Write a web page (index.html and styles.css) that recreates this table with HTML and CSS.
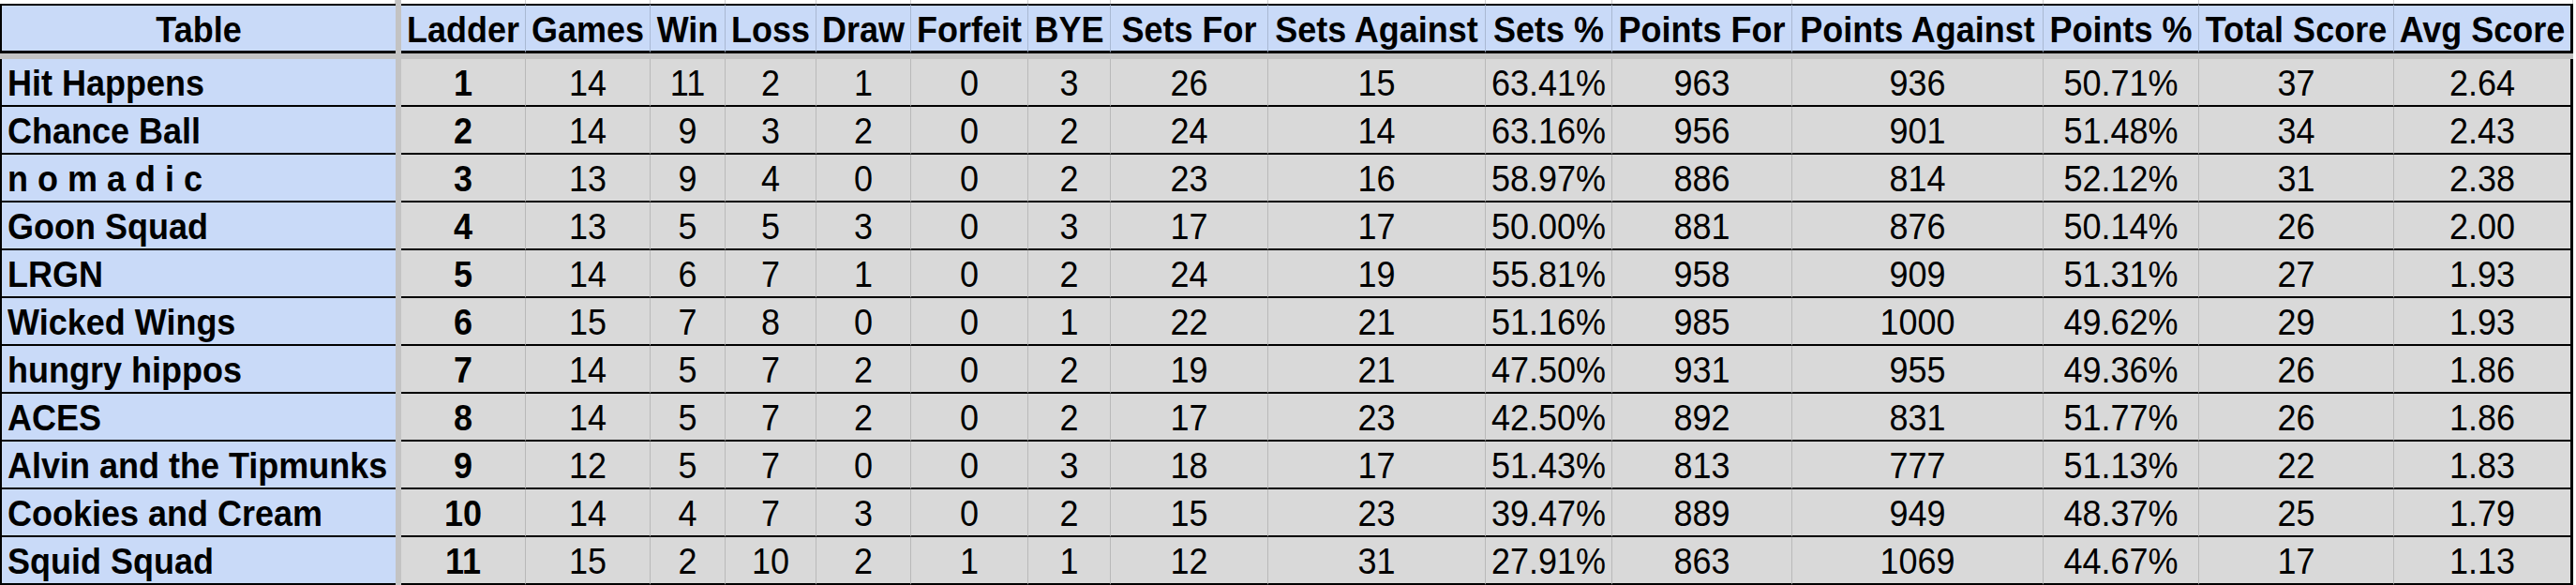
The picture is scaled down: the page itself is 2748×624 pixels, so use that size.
FILE: index.html
```html
<!DOCTYPE html>
<html lang="en">
<head>
<meta charset="utf-8">
<title>Table</title>
<link rel="stylesheet" href="styles.css">
</head>
<body>
<div class="sheet" role="table">
  <div class="freeze-col"></div>
  <div class="freeze-row"></div>

  <div class="strip"></div><div class="strip"></div><div class="strip"></div><div class="strip"></div><div class="strip"></div><div class="strip"></div><div class="strip"></div><div class="strip"></div><div class="strip"></div><div class="strip"></div><div class="strip"></div><div class="strip"></div><div class="strip"></div><div class="strip"></div><div class="strip"></div><div class="strip"></div>

  <div class="cell h name-h"><span>Table</span></div>
  <div class="cell h"><span>Ladder</span></div>
  <div class="cell h"><span>Games</span></div>
  <div class="cell h"><span>Win</span></div>
  <div class="cell h"><span>Loss</span></div>
  <div class="cell h"><span>Draw</span></div>
  <div class="cell h"><span>Forfeit</span></div>
  <div class="cell h"><span>BYE</span></div>
  <div class="cell h"><span>Sets For</span></div>
  <div class="cell h"><span>Sets Against</span></div>
  <div class="cell h"><span>Sets %</span></div>
  <div class="cell h"><span>Points For</span></div>
  <div class="cell h"><span>Points Against</span></div>
  <div class="cell h"><span>Points %</span></div>
  <div class="cell h"><span>Total Score</span></div>
  <div class="cell h last"><span>Avg Score</span></div>

  <div class="cell n"><span>Hit Happens</span></div><div class="cell d b"><span>1</span></div><div class="cell d"><span>14</span></div><div class="cell d"><span>11</span></div><div class="cell d"><span>2</span></div><div class="cell d"><span>1</span></div><div class="cell d"><span>0</span></div><div class="cell d"><span>3</span></div><div class="cell d"><span>26</span></div><div class="cell d"><span>15</span></div><div class="cell d"><span>63.41%</span></div><div class="cell d"><span>963</span></div><div class="cell d"><span>936</span></div><div class="cell d"><span>50.71%</span></div><div class="cell d"><span>37</span></div><div class="cell d last"><span>2.64</span></div>

  <div class="cell n"><span>Chance Ball</span></div><div class="cell d b"><span>2</span></div><div class="cell d"><span>14</span></div><div class="cell d"><span>9</span></div><div class="cell d"><span>3</span></div><div class="cell d"><span>2</span></div><div class="cell d"><span>0</span></div><div class="cell d"><span>2</span></div><div class="cell d"><span>24</span></div><div class="cell d"><span>14</span></div><div class="cell d"><span>63.16%</span></div><div class="cell d"><span>956</span></div><div class="cell d"><span>901</span></div><div class="cell d"><span>51.48%</span></div><div class="cell d"><span>34</span></div><div class="cell d last"><span>2.43</span></div>

  <div class="cell n"><span>n o m a d i c</span></div><div class="cell d b"><span>3</span></div><div class="cell d"><span>13</span></div><div class="cell d"><span>9</span></div><div class="cell d"><span>4</span></div><div class="cell d"><span>0</span></div><div class="cell d"><span>0</span></div><div class="cell d"><span>2</span></div><div class="cell d"><span>23</span></div><div class="cell d"><span>16</span></div><div class="cell d"><span>58.97%</span></div><div class="cell d"><span>886</span></div><div class="cell d"><span>814</span></div><div class="cell d"><span>52.12%</span></div><div class="cell d"><span>31</span></div><div class="cell d last"><span>2.38</span></div>

  <div class="cell n"><span>Goon Squad</span></div><div class="cell d b"><span>4</span></div><div class="cell d"><span>13</span></div><div class="cell d"><span>5</span></div><div class="cell d"><span>5</span></div><div class="cell d"><span>3</span></div><div class="cell d"><span>0</span></div><div class="cell d"><span>3</span></div><div class="cell d"><span>17</span></div><div class="cell d"><span>17</span></div><div class="cell d"><span>50.00%</span></div><div class="cell d"><span>881</span></div><div class="cell d"><span>876</span></div><div class="cell d"><span>50.14%</span></div><div class="cell d"><span>26</span></div><div class="cell d last"><span>2.00</span></div>

  <div class="cell n"><span>LRGN</span></div><div class="cell d b"><span>5</span></div><div class="cell d"><span>14</span></div><div class="cell d"><span>6</span></div><div class="cell d"><span>7</span></div><div class="cell d"><span>1</span></div><div class="cell d"><span>0</span></div><div class="cell d"><span>2</span></div><div class="cell d"><span>24</span></div><div class="cell d"><span>19</span></div><div class="cell d"><span>55.81%</span></div><div class="cell d"><span>958</span></div><div class="cell d"><span>909</span></div><div class="cell d"><span>51.31%</span></div><div class="cell d"><span>27</span></div><div class="cell d last"><span>1.93</span></div>

  <div class="cell n"><span>Wicked Wings</span></div><div class="cell d b"><span>6</span></div><div class="cell d"><span>15</span></div><div class="cell d"><span>7</span></div><div class="cell d"><span>8</span></div><div class="cell d"><span>0</span></div><div class="cell d"><span>0</span></div><div class="cell d"><span>1</span></div><div class="cell d"><span>22</span></div><div class="cell d"><span>21</span></div><div class="cell d"><span>51.16%</span></div><div class="cell d"><span>985</span></div><div class="cell d"><span>1000</span></div><div class="cell d"><span>49.62%</span></div><div class="cell d"><span>29</span></div><div class="cell d last"><span>1.93</span></div>

  <div class="cell n"><span>hungry hippos</span></div><div class="cell d b"><span>7</span></div><div class="cell d"><span>14</span></div><div class="cell d"><span>5</span></div><div class="cell d"><span>7</span></div><div class="cell d"><span>2</span></div><div class="cell d"><span>0</span></div><div class="cell d"><span>2</span></div><div class="cell d"><span>19</span></div><div class="cell d"><span>21</span></div><div class="cell d"><span>47.50%</span></div><div class="cell d"><span>931</span></div><div class="cell d"><span>955</span></div><div class="cell d"><span>49.36%</span></div><div class="cell d"><span>26</span></div><div class="cell d last"><span>1.86</span></div>

  <div class="cell n"><span>ACES</span></div><div class="cell d b"><span>8</span></div><div class="cell d"><span>14</span></div><div class="cell d"><span>5</span></div><div class="cell d"><span>7</span></div><div class="cell d"><span>2</span></div><div class="cell d"><span>0</span></div><div class="cell d"><span>2</span></div><div class="cell d"><span>17</span></div><div class="cell d"><span>23</span></div><div class="cell d"><span>42.50%</span></div><div class="cell d"><span>892</span></div><div class="cell d"><span>831</span></div><div class="cell d"><span>51.77%</span></div><div class="cell d"><span>26</span></div><div class="cell d last"><span>1.86</span></div>

  <div class="cell n"><span>Alvin and the Tipmunks</span></div><div class="cell d b"><span>9</span></div><div class="cell d"><span>12</span></div><div class="cell d"><span>5</span></div><div class="cell d"><span>7</span></div><div class="cell d"><span>0</span></div><div class="cell d"><span>0</span></div><div class="cell d"><span>3</span></div><div class="cell d"><span>18</span></div><div class="cell d"><span>17</span></div><div class="cell d"><span>51.43%</span></div><div class="cell d"><span>813</span></div><div class="cell d"><span>777</span></div><div class="cell d"><span>51.13%</span></div><div class="cell d"><span>22</span></div><div class="cell d last"><span>1.83</span></div>

  <div class="cell n"><span>Cookies and Cream</span></div><div class="cell d b"><span>10</span></div><div class="cell d"><span>14</span></div><div class="cell d"><span>4</span></div><div class="cell d"><span>7</span></div><div class="cell d"><span>3</span></div><div class="cell d"><span>0</span></div><div class="cell d"><span>2</span></div><div class="cell d"><span>15</span></div><div class="cell d"><span>23</span></div><div class="cell d"><span>39.47%</span></div><div class="cell d"><span>889</span></div><div class="cell d"><span>949</span></div><div class="cell d"><span>48.37%</span></div><div class="cell d"><span>25</span></div><div class="cell d last"><span>1.79</span></div>

  <div class="cell n"><span>Squid Squad</span></div><div class="cell d b"><span>11</span></div><div class="cell d"><span>15</span></div><div class="cell d"><span>2</span></div><div class="cell d"><span>10</span></div><div class="cell d"><span>2</span></div><div class="cell d"><span>1</span></div><div class="cell d"><span>1</span></div><div class="cell d"><span>12</span></div><div class="cell d"><span>31</span></div><div class="cell d"><span>27.91%</span></div><div class="cell d"><span>863</span></div><div class="cell d"><span>1069</span></div><div class="cell d"><span>44.67%</span></div><div class="cell d"><span>17</span></div><div class="cell d last"><span>1.13</span></div>
</div>
</body>
</html>
```
FILE: styles.css
```css
* {
  box-sizing: border-box;
}

html, body {
  margin: 0;
  padding: 0;
  background: #ffffff;
}

body {
  width: 2748px;
  height: 624px;
  overflow: hidden;
  font-family: "Liberation Sans", Arial, sans-serif;
  color: #000000;
}

.sheet {
  display: grid;
  grid-template-columns: 422px 6px 133px 133px 80px 97px 101px 125px 88px 168px 232px 135px 192px 268px 166px 208px 191px;
  grid-template-rows: 4px 53px 6px repeat(11, 51px);
  width: 2745px;
}

.freeze-col {
  grid-column: 2;
  grid-row: 1 / -1;
  background: #c3c3c3;
}

.freeze-row {
  grid-column: 1 / -1;
  grid-row: 3;
  background: #c3c3c3;
}

.strip {
  background: #ffffff;
  border-right: 1px solid #d0d0d0;
}

.cell {
  display: flex;
  align-items: center;
  justify-content: center;
  font-size: 36px;
  line-height: 1;
  white-space: nowrap;
  overflow: hidden;
}

.cell span {
  display: block;
  transform: scaleY(1.1);
}

.n span {
  transform-origin: left center;
}

.h {
  background: #c9daf8;
  font-weight: bold;
  border-top: 2px solid #000000;
  border-bottom: 3px solid #000000;
  border-right: 1px solid #a9b8d2;
  padding-top: 4px;
}

.name-h {
  border-left: 2px solid #000000;
  border-right: 0;
}

.n {
  background: #c9daf8;
  font-weight: bold;
  justify-content: flex-start;
  padding-left: 6px;
  padding-top: 2px;
  border-left: 2px solid #000000;
  border-bottom: 2px solid #000000;
}

.d {
  background: #d9d9d9;
  border-bottom: 2px solid #000000;
  border-right: 1px solid #b9b9b9;
  padding-top: 2px;
}

.b {
  font-weight: bold;
}

.last {
  border-right: 3px solid #000000;
}
```
